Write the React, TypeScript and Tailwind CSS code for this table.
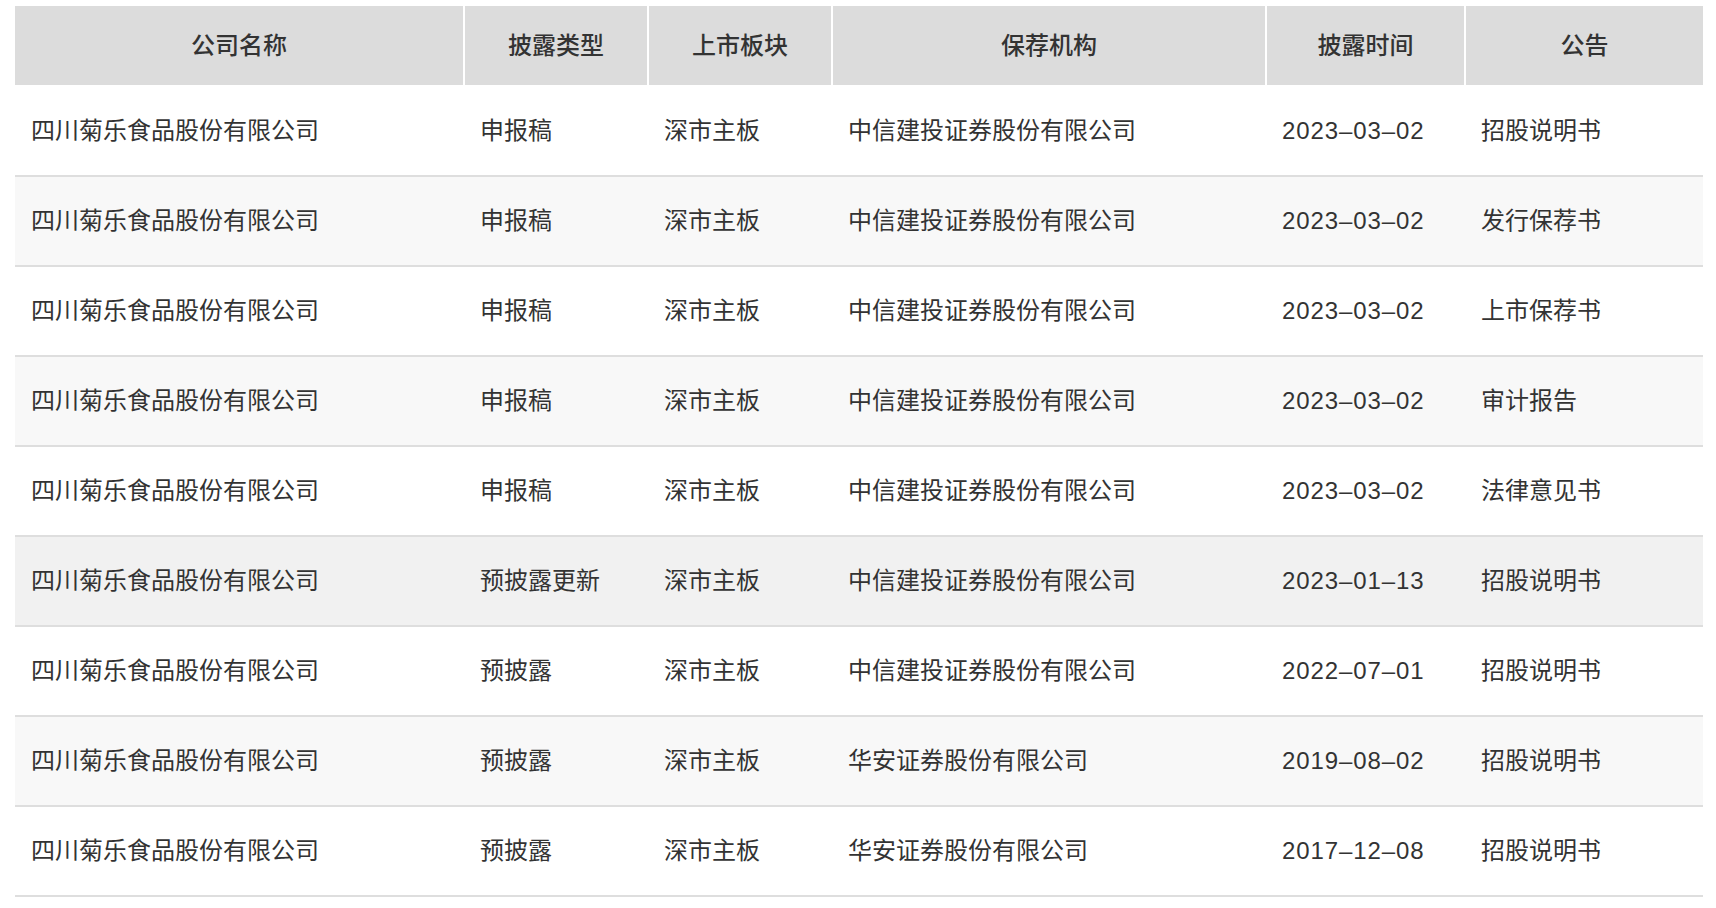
const headers = ["公司名称", "披露类型", "上市板块", "保荐机构", "披露时间", "公告"];

const widths = ["w-[449px]", "w-[184px]", "w-[184px]", "w-[434px]", "w-[199px]", "w-[238px]"];

const rows = [
  ["四川菊乐食品股份有限公司", "申报稿", "深市主板", "中信建投证券股份有限公司", "2023–03–02", "招股说明书"],
  ["四川菊乐食品股份有限公司", "申报稿", "深市主板", "中信建投证券股份有限公司", "2023–03–02", "发行保荐书"],
  ["四川菊乐食品股份有限公司", "申报稿", "深市主板", "中信建投证券股份有限公司", "2023–03–02", "上市保荐书"],
  ["四川菊乐食品股份有限公司", "申报稿", "深市主板", "中信建投证券股份有限公司", "2023–03–02", "审计报告"],
  ["四川菊乐食品股份有限公司", "申报稿", "深市主板", "中信建投证券股份有限公司", "2023–03–02", "法律意见书"],
  ["四川菊乐食品股份有限公司", "预披露更新", "深市主板", "中信建投证券股份有限公司", "2023–01–13", "招股说明书"],
  ["四川菊乐食品股份有限公司", "预披露", "深市主板", "中信建投证券股份有限公司", "2022–07–01", "招股说明书"],
  ["四川菊乐食品股份有限公司", "预披露", "深市主板", "华安证券股份有限公司", "2019–08–02", "招股说明书"],
  ["四川菊乐食品股份有限公司", "预披露", "深市主板", "华安证券股份有限公司", "2017–12–08", "招股说明书"],
];

// row 6 is the hovered one in the shot
const HOVER = 5;

export default function App() {
  return (
    <div
      className="min-h-[908px] bg-white pt-[6px] pl-[15px] text-[#333]"
      style={{ fontFamily: "'Liberation Sans', 'Noto Sans CJK SC', sans-serif" }}
    >
      <table className="w-[1688px] table-fixed border-collapse text-[24px]">
        <thead>
          <tr className="bg-[#dcdcdc]">
            {headers.map((h, i) => (
              <th
                key={h}
                className={`${widths[i]} h-[80px] border-b-2 border-white text-center font-medium text-[#333] ${
                  i < headers.length - 1 ? "border-r-2" : ""
                }`}
              >
                {h}
              </th>
            ))}
          </tr>
        </thead>
        <tbody>
          {rows.map((r, ri) => (
            <tr
              key={ri}
              className={`border-b-2 border-[#dedede] ${
                ri === HOVER ? "bg-[#f1f1f1]" : ri % 2 === 1 ? "bg-[#f8f8f8]" : "bg-white"
              }`}
            >
              {r.map((c, ci) => (
                <td
                  key={ci}
                  className={`h-[90px] whitespace-nowrap pl-4 text-left font-normal leading-none ${
                    ci === 4 ? "tracking-[0.9px]" : ""
                  }`}
                >
                  {c}
                </td>
              ))}
            </tr>
          ))}
        </tbody>
      </table>
    </div>
  );
}
